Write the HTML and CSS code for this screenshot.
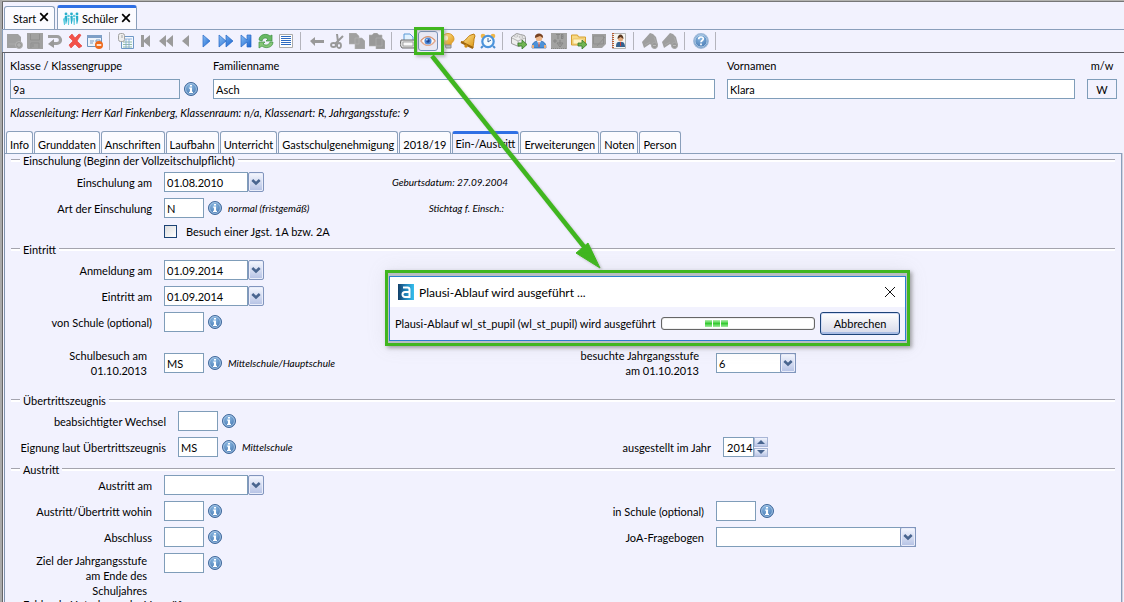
FILE: index.html
```html
<!DOCTYPE html>
<html lang="de">
<head>
<meta charset="utf-8">
<title>Schüler</title>
<link rel="stylesheet" href="styles.css">
</head>
<body>
<svg class="defs" aria-hidden="true">
  <defs>
    <linearGradient id="blue" x1="0" y1="0" x2="1" y2="1"><stop offset="0" stop-color="#8bc0f5"/><stop offset="1" stop-color="#1763cf"/></linearGradient>
    <linearGradient id="gold" x1="0" y1="0" x2="1" y2="1"><stop offset="0" stop-color="#ffe9a0"/><stop offset="1" stop-color="#dc930c"/></linearGradient>
    <linearGradient id="logo"><stop offset="0" stop-color="#123f68"/><stop offset=".4" stop-color="#1f78ae"/><stop offset="1" stop-color="#35c0ef"/></linearGradient>
    <radialGradient id="ball" cx=".45" cy=".3" r=".8"><stop offset="0" stop-color="#8ab8e2"/><stop offset="1" stop-color="#3b6da9"/></radialGradient>
  </defs>
  <symbol id="info" viewBox="0 0 14 14"><circle cx="7" cy="7" r="6.5" fill="url(#ball)" stroke="#42699b"/><circle cx="7" cy="7" r="5.4" fill="none" stroke="#b5d1eb" stroke-width=".8"/><path d="M6 3h2v1.6H6zM5.2 5.6H8v4.2h1v1.1H5V9.8h1V6.7h-.8z" fill="#fff"/></symbol>
  <symbol id="arrow-down" viewBox="0 0 10 8"><path d="M1.3 2L5 5.500 8.700 2" fill="none" stroke="#49658f" stroke-width="2.600"/></symbol>
  <symbol id="close" viewBox="0 0 10 10"><path d="M1.200 1.200l7.600 7.600M8.800 1.200L1.200 8.800" stroke="currentColor" stroke-width="1.700" fill="none"/></symbol>
  <symbol id="plus-page" viewBox="0 0 16 16"><path d="M0 1h11l3 3v11H0z" fill="#a0a0a0"/><path d="M2 11h8" stroke="#aaa"/><circle cx="12" cy="12" r="3.500" fill="#999" stroke="#b4b4b4"/><path d="M10 12h4M12 10v4" stroke="#b9b9b9"/></symbol>
  <symbol id="save" viewBox="0 0 16 16"><path d="M0 0h16v16H1l-1-1z" fill="#a0a0a0"/><path d="M3.500 1v6h9V1M4 15v-5h8v5M6 11v3" stroke="#8f8f8f" fill="none"/></symbol>
  <symbol id="undo" viewBox="0 0 16 16"><path d="M1 3.500h9a3.500 3.500 0 0 1 0 7H6" fill="none" stroke="#a0a0a0" stroke-width="3.200"/><path d="M7 6v9l-6-4z" fill="#999"/></symbol>
  <symbol id="delete" viewBox="0 0 16 16"><path d="M2 4l3-3 3 4 4-4 2 1-4 6 5 5-3 2-4-4-4 4-2-3 4-4z" fill="#f35149" stroke="#e33b34" stroke-width=".6"/></symbol>
  <symbol id="card" viewBox="0 0 16 16"><path d="M.5 2.500h14v11H.5z" fill="#eff4fa" stroke="#6c93be"/><path d="M0 2h15v3H0z" fill="#7e9fc7"/><path d="M3 8h4M3 10h3M9 7h4v2H9z" stroke="#7b9bc0" fill="none"/><circle cx="12" cy="12" r="4" fill="#ee6a1c"/><path d="M9.700 12h4.600" stroke="#fff" stroke-width="1.600"/></symbol>
  <symbol id="sheet" viewBox="0 0 16 16"><path d="M3.500 3.500h12v12h-12z" fill="#f4f9ff" stroke="#6f98c7"/><path d="M5 9h9M5 11.500h9M5 14h9" stroke="#7aad8c" stroke-width=".8"/><path d="M7 6h7M8 6v9M11 6v9" stroke="#7fa5d5" stroke-width=".8"/><rect x=".5" y=".5" width="6" height="8" rx="2" fill="#eee" stroke="#a2a2a2"/><path d="M4 2v3" stroke="#aaa"/></symbol>
  <symbol id="first" viewBox="0 0 16 16"><path d="M3 2h3v5l6-5v12L6 9v5H3z" fill="#9b9b9b"/></symbol>
  <symbol id="rewind" viewBox="0 0 16 16"><path d="M8 2v12L1 8zM15 2v12L8 8z" fill="#9b9b9b"/></symbol>
  <symbol id="prev" viewBox="0 0 16 16"><path d="M11 2v12L4 8z" fill="#9b9b9b"/></symbol>
  <symbol id="next" viewBox="0 0 16 16"><path d="M5 2v12l7-6z" fill="url(#blue)" stroke="#2769c7" stroke-width=".7"/></symbol>
  <symbol id="forward" viewBox="0 0 16 16"><path d="M1 2v12l7-6zM8 2v12l7-6z" fill="url(#blue)" stroke="#2769c7" stroke-width=".7"/></symbol>
  <symbol id="last" viewBox="0 0 16 16"><path d="M3 2v12l6-5v5h4V2H9v5z" fill="url(#blue)" stroke="#2769c7" stroke-width=".7"/></symbol>
  <symbol id="refresh" viewBox="0 0 16 16"><path d="M1 7c0-6 8-7 11-4l2-1v6H8l2-2C7 4 5 5 4 8z" fill="#69b965" stroke="#3e9043" stroke-width=".7"/><path d="M15 9c0 6-8 7-11 4l-3 2V9h6l-2 2c3 2 6 1 7-2z" fill="#85c678" stroke="#3e9043" stroke-width=".7"/></symbol>
  <symbol id="list" viewBox="0 0 16 16"><path d="M1.500 1.500h13v13h-13z" fill="#fff" stroke="#aaa"/><path d="M3 3.500h10M3 5.500h10M3 7.500h10M3 9.500h10M3 11.500h10" stroke="#2e6bc2"/></symbol>
  <symbol id="back" viewBox="0 0 16 16"><path d="M1 8l5-4v3h9v3H6v3z" fill="#999"/></symbol>
  <symbol id="cut" viewBox="0 0 16 16"><path d="M8 1l1 8M14 3l-8 8" stroke="#999" stroke-width="2"/><ellipse cx="4.500" cy="12" rx="2.500" ry="2" fill="none" stroke="#999" stroke-width="1.800"/><ellipse cx="10" cy="12.500" rx="2" ry="2.500" fill="none" stroke="#999" stroke-width="1.800"/></symbol>
  <symbol id="copy" viewBox="0 0 16 16"><path d="M0 0h7l3 3v8H0zM6 5h7l3 3v8H6z" fill="#a0a0a0" stroke="#b5b5b5" stroke-width=".6"/></symbol>
  <symbol id="paste" viewBox="0 0 16 16"><path d="M0 2h3l2-2h3l2 2h3v11H0zM7 5h6l3 3v8H7z" fill="#999" stroke="#b3b3b3" stroke-width=".6"/></symbol>
  <symbol id="print" viewBox="0 0 16 16"><path d="M4 8V1h6l3 3v4" fill="#e2f2ff" stroke="#5b99d6"/><path d="M1 7h14l1 5-2 3H2l-2-3z" fill="#ddd" stroke="#6c6c6c"/><path d="M3 9h10v4H3z" fill="#f9f9f9" stroke="#888" stroke-width=".7"/></symbol>
  <symbol id="eye" viewBox="0 0 18 16"><path d="M1 8q8-10 16 0q-8 10-16 0z" fill="#fff" stroke="#e1aa91" stroke-width="1.500"/><path d="M1 7q8-8 16 0" fill="none" stroke="#d29070"/><circle cx="9" cy="8" r="4" fill="#4d87d5"/><circle cx="9" cy="8" r="2" fill="#204690"/><circle cx="7.700" cy="6.500" r="1" fill="#b8dcff"/></symbol>
  <symbol id="bulb" viewBox="0 0 16 16"><path d="M5 12c0-3-3-3-3-6a6 5.500 0 0 1 12 0c0 3-3 3-3 6z" fill="url(#gold)" stroke="#d99a2b"/><path d="M5 12h6v3H6z" fill="#bbb" stroke="#8b8b8b"/><ellipse cx="6" cy="5" rx="2" ry="2.500" fill="#fff8d4"/></symbol>
  <symbol id="bell" viewBox="0 0 16 16"><path d="M1 9c5 0 6-6 10-7l3-1 1 2-1 3c0 4-1 6-1 9z" fill="url(#gold)" stroke="#bd7c0f"/><path d="M1 9l12 6" stroke="#9f6510" stroke-width="2"/><circle cx="6" cy="13" r="1.700" fill="#d08b10"/></symbol>
  <symbol id="clock" viewBox="0 0 16 16"><path d="M3 13l-2 2M13 13l2 2" stroke="#4d8ecf" stroke-width="2"/><circle cx="3" cy="3" r="2.300" fill="#efb649"/><circle cx="13" cy="3" r="2.300" fill="#efb649"/><circle cx="8" cy="8.500" r="5.700" fill="#f5fbff" stroke="#4b93dc" stroke-width="2.200"/><path d="M8 5v4l3-2" fill="none" stroke="#3467a2"/></symbol>
  <symbol id="go" viewBox="0 0 16 16"><path d="M7 10h4V7l5 4.500-5 4.500v-3H7z" fill="#71b553" stroke="#35792a" stroke-width=".8"/></symbol>
  <symbol id="box" viewBox="0 0 16 16"><path d="M.500 4l3-2 2-1.500 4 1 4 1 1 2v6l-7 3-7-3z" fill="#eee" stroke="#999"/><path d="M1 5l6 3 7-3M7 8v5" stroke="#b4b4b4" fill="none"/><ellipse cx="5" cy="3" rx="2" ry="1" fill="#fff" stroke="#999" stroke-width=".6"/><ellipse cx="10" cy="4" rx="2" ry="1" fill="#fff" stroke="#999" stroke-width=".6"/><use href="#go"/></symbol>
  <symbol id="person" viewBox="0 0 16 16"><path d="M1 15c0-5 2-6 5-7h4c3 1 5 2 5 7z" fill="#4c91d9" stroke="#2862a2" stroke-width=".7"/><path d="M6 8h4l-2 4z" fill="#fff"/><path d="M8 9v5" stroke="#d34c37"/><circle cx="8" cy="5" r="3.300" fill="#edb78b"/><path d="M4 5C3-1 13-1 12 5L9 3z" fill="#784323"/><path d="M1 12h2v3H1zM13 12h2v3h-2z" fill="#e8ad7b"/></symbol>
  <symbol id="tb" viewBox="0 0 16 16"><path d="M0 0h16v16H0z" fill="#a2a2a2"/><path d="M5 1.500h4M7 2v4M10.500 1v5M10 1.500h2v2h-2h2v2h-2M2 8h4M4 6v4M9 7v5M6 10l3 4 3-4z" stroke="#858585" fill="none"/><path d="M0 15.500h16" stroke="#888" stroke-dasharray="1 1"/></symbol>
  <symbol id="folder" viewBox="0 0 16 16"><path d="M.500 2h6l1 2h7v8H.500z" fill="#f8d985" stroke="#d5a030"/><path d="M2 6h11v5H2z" fill="#fff3c4" stroke="#e5b953" stroke-width=".7"/><use href="#go"/></symbol>
  <symbol id="note" viewBox="0 0 16 16"><path d="M1 1h14v10l-4 4H1z" fill="#a0a0a0"/><path d="M2.500 3h10v8h-10zM6 13l8-9" stroke="#8f8f8f" fill="none"/></symbol>
  <symbol id="contact" viewBox="0 0 16 16"><path d="M1.500.500h13v15h-13z" fill="#f5f5f2" stroke="#b5b5b5"/><path d="M2 0v16" stroke="#bb5c32" stroke-width="2" stroke-dasharray="1 1"/><path d="M5 14c0-4 1-5 3-5h3c2 0 3 2 3 5z" fill="#35618e"/><circle cx="9.500" cy="6" r="2.500" fill="#e4ab7f"/><path d="M6.500 6c0-6 6-6 6 0l-3-2z" fill="#593620"/><path d="M9.500 9v4" stroke="#cf3e36"/></symbol>
  <symbol id="tag" viewBox="0 0 16 16"><path d="M0 9l8-9 3 1 3 3 2 8-3 4-5-5-6 4z" fill="#9f9f9f"/><path d="M3 12l5-3M12 4l2 6" stroke="#aaa"/><circle cx="12.500" cy="12.500" r="3" fill="#999" stroke="#aaa"/><path d="M11 12.500h3" stroke="#bbb"/></symbol>
  <symbol id="help" viewBox="0 0 14 14"><circle cx="7" cy="7" r="6.400" fill="url(#ball)" stroke="#9fb9d8"/><circle cx="7" cy="7" r="5.300" fill="none" stroke="#c9def1" stroke-width=".7"/><path d="M5 5.400c0-2.500 4-2.500 4-.3 0 1.500-2 1.500-2 3M7 9.200v1.500" fill="none" stroke="#fff" stroke-width="1.500"/></symbol>
</svg>

<div class="window">
  <nav class="docs" aria-label="Dokumente">
    <div class="doc"><span>Start</span><button aria-label="Start schließen"><svg width="10" height="10"><use href="#close"/></svg></button></div>
    <div class="doc doc-active">
      <svg width="16" height="13" viewBox="0 0 16 13"><g fill="#29aecb"><circle cx="3" cy="2" r="1.400"/><circle cx="8.500" cy="2" r="1.400"/><circle cx="14" cy="2" r="1.400"/><path d="M1.800 4h2.400v4l-1 4H2.600zM7.300 4h2.400v4l-1 4h-.6zM12.800 4h2.400v4l-1 4h-.6z"/></g><g fill="#5ecde0"><circle cx="5.500" cy="4" r="1.300"/><circle cx="11.200" cy="4" r="1.300"/><path d="M0 7l2-2v8H1zM4.500 6h2l-.5 7h-1zM10.200 6h2l-.5 7h-1z"/></g></svg>
      <span>Schüler</span><button aria-label="Schüler schließen"><svg width="10" height="10"><use href="#close"/></svg></button>
    </div>
  </nav>

  <div class="toolbar" role="toolbar" aria-label="Werkzeuge">
    <div class="tools">
      <button aria-label="Neu"><svg><use href="#plus-page"/></svg></button>
      <button aria-label="Speichern"><svg><use href="#save"/></svg></button>
      <button aria-label="Rückgängig"><svg><use href="#undo"/></svg></button>
      <button aria-label="Löschen"><svg><use href="#delete"/></svg></button>
      <button aria-label="Karte entfernen"><svg><use href="#card"/></svg></button>
    </div>
    <div class="tools">
      <button aria-label="Tabelle"><svg><use href="#sheet"/></svg></button>
      <button aria-label="Erster"><svg><use href="#first"/></svg></button>
      <button aria-label="Schnell zurück"><svg><use href="#rewind"/></svg></button>
      <button aria-label="Voriger"><svg><use href="#prev"/></svg></button>
      <button aria-label="Nächster"><svg><use href="#next"/></svg></button>
      <button aria-label="Schnell vor"><svg><use href="#forward"/></svg></button>
      <button aria-label="Letzter"><svg><use href="#last"/></svg></button>
      <button aria-label="Aktualisieren"><svg><use href="#refresh"/></svg></button>
      <button aria-label="Liste"><svg><use href="#list"/></svg></button>
    </div>
    <div class="tools">
      <button aria-label="Zurück"><svg><use href="#back"/></svg></button>
      <button aria-label="Ausschneiden"><svg><use href="#cut"/></svg></button>
      <button aria-label="Kopieren"><svg><use href="#copy"/></svg></button>
      <button aria-label="Einfügen"><svg><use href="#paste"/></svg></button>
    </div>
    <div class="tools">
      <button aria-label="Drucken"><svg><use href="#print"/></svg></button>
      <button class="pressed" aria-label="Plausibilität prüfen"><svg><use href="#eye"/></svg></button>
      <button aria-label="Hinweis"><svg><use href="#bulb"/></svg></button>
      <button aria-label="Erinnerung"><svg><use href="#bell"/></svg></button>
      <button aria-label="Wiedervorlage"><svg><use href="#clock"/></svg></button>
    </div>
    <div class="tools">
      <button aria-label="Modul öffnen"><svg><use href="#box"/></svg></button>
      <button aria-label="Person"><svg><use href="#person"/></svg></button>
      <button aria-label="Textbaustein"><svg><use href="#tb"/></svg></button>
      <button aria-label="Ordner öffnen"><svg><use href="#folder"/></svg></button>
      <button aria-label="Notiz"><svg><use href="#note"/></svg></button>
      <button aria-label="Kontakte"><svg><use href="#contact"/></svg></button>
    </div>
    <div class="tools">
      <button aria-label="Markierung hinzufügen"><svg><use href="#tag"/></svg></button>
      <button aria-label="Markierung entfernen"><svg><use href="#tag"/></svg></button>
    </div>
    <div class="tools">
      <button aria-label="Hilfe"><svg><use href="#help"/></svg></button>
    </div>
  </div>

  <main>
    <div class="head">
      <div class="stack"><label for="klasse">Klasse / Klassengruppe</label><div class="field"><input class="klasse readonly" id="klasse" value="9a" readonly><svg class="info"><use href="#info"/></svg></div></div>
      <div class="stack"><label for="fam">Familienname</label><input id="fam" value="Asch"></div>
      <div class="stack"><label for="vor">Vornamen</label><input id="vor" value="Klara"></div>
      <div class="stack center"><label for="mw">m/w</label><input class="readonly center" id="mw" value="W" readonly></div>
    </div>
    <p class="summary">Klassenleitung: Herr Karl Finkenberg, Klassenraum: n/a, Klassenart: R, Jahrgangsstufe: 9</p>

    <div class="tabs" role="tablist">
      <button role="tab">Info</button><button role="tab">Grunddaten</button><button role="tab">Anschriften</button><button role="tab">Laufbahn</button><button role="tab">Unterricht</button><button role="tab">Gastschulgenehmigung</button><button role="tab">2018/19</button><button role="tab" class="active" aria-selected="true">Ein-/Austritt</button><button role="tab">Erweiterungen</button><button role="tab">Noten</button><button role="tab">Person</button>
    </div>

    <div class="panel">
      <section class="group einschulung">
        <h2>Einschulung (Beginn der Vollzeitschulpflicht)</h2>
        <div class="rows">
          <div class="row"><label for="ea">Einschulung am</label><div class="combo date"><input id="ea" value="01.08.2010"><button aria-label="Datum wählen"><svg><use href="#arrow-down"/></svg></button></div><span class="hint">Geburtsdatum: 27.09.2004</span></div>
          <div class="row"><label for="art">Art der Einschulung</label><div class="field"><input class="code" id="art" value="N"><svg class="info"><use href="#info"/></svg><span class="hint">normal (fristgemäß)</span></div><span class="hint">Stichtag f. Einsch.:</span></div>
          <div class="row check"><span></span><label><input type="checkbox">Besuch einer Jgst. 1A bzw. 2A</label></div>
        </div>
      </section>

      <section class="group eintritt">
        <h2>Eintritt</h2>
        <div class="rows">
          <div class="row"><label for="anm">Anmeldung am</label><div class="combo date"><input id="anm" value="01.09.2014"><button aria-label="Datum wählen"><svg><use href="#arrow-down"/></svg></button></div></div>
          <div class="row"><label for="ein">Eintritt am</label><div class="combo date"><input id="ein" value="01.09.2014"><button aria-label="Datum wählen"><svg><use href="#arrow-down"/></svg></button></div></div>
          <div class="row"><label for="von">von Schule (optional)</label><div class="field"><input class="code" id="von"><svg class="info"><use href="#info"/></svg></div></div>
          <div class="row double"><label for="besuch">Schulbesuch am<br>01.10.2013</label><div class="field"><input class="code" id="besuch" value="MS"><svg class="info"><use href="#info"/></svg><span class="hint">Mittelschule/Hauptschule</span></div><label for="jgst">besuchte Jahrgangsstufe<br>am 01.10.2013</label><div class="combo grade"><select id="jgst"><option>6</option></select><span class="knob"><svg><use href="#arrow-down"/></svg></span></div></div>
        </div>
      </section>

      <section class="group zeugnis">
        <h2>Übertrittszeugnis</h2>
        <div class="rows">
          <div class="row"><label for="wechsel">beabsichtigter Wechsel</label><div class="field"><input class="code" id="wechsel"><svg class="info"><use href="#info"/></svg></div></div>
          <div class="row"><label for="eig">Eignung laut Übertrittszeugnis</label><div class="field"><input class="code" id="eig" value="MS"><svg class="info"><use href="#info"/></svg><span class="hint">Mittelschule</span></div><label for="jahr">ausgestellt im Jahr</label><div class="spin"><input id="jahr" value="2014"><div class="steps"><button aria-label="Mehr"><svg viewBox="0 0 8 4"><path d="M0 4l4-4 4 4z"/></svg></button><button aria-label="Weniger"><svg viewBox="0 0 8 4"><path d="M0 0l4 4 4-4z"/></svg></button></div></div></div>
        </div>
      </section>

      <section class="group austritt">
        <h2>Austritt</h2>
        <div class="rows">
          <div class="row"><label for="aus">Austritt am</label><div class="combo date"><input id="aus"><button aria-label="Datum wählen"><svg><use href="#arrow-down"/></svg></button></div></div>
          <div class="row"><label for="wohin">Austritt/Übertritt wohin</label><div class="field"><input class="code" id="wohin"><svg class="info"><use href="#info"/></svg></div><label for="insch">in Schule (optional)</label><div class="field"><input class="code" id="insch"><svg class="info"><use href="#info"/></svg></div></div>
          <div class="row"><label for="abs">Abschluss</label><div class="field"><input class="code" id="abs"><svg class="info"><use href="#info"/></svg></div><label for="joa">JoA-Fragebogen</label><div class="combo joa"><select id="joa"><option></option></select><span class="knob"><svg><use href="#arrow-down"/></svg></span></div></div>
          <div class="row tall"><label for="ziel">Ziel der Jahrgangsstufe<br>am Ende des<br>Schuljahres</label><div class="field"><input class="code" id="ziel"><svg class="info"><use href="#info"/></svg></div></div>
        </div>
      </section>

      <section class="group">
        <h2>Fehlende Unterlagen der Vorprüf.</h2>
      </section>
    </div>
  </main>
</div>

<div class="marker"></div>
<svg class="pointer" width="190" height="225" viewBox="0 0 190 225" aria-hidden="true"><path d="M12 5L165 197" stroke="#40b61f" stroke-width="4.500"/><path d="M180 217l-24-15 12-10z" fill="#40b61f" stroke="#40b61f"/></svg>

<div class="dialog" role="dialog" aria-labelledby="dlg-title">
  <div class="dialog-inner">
    <header class="dialog-title">
      <svg width="16" height="16" viewBox="0 0 16 16"><path d="M0 0h16v16H0z" fill="url(#logo)"/><path d="M5 3.500h4.500q2 0 2 2V13H7a2.300 2.300 0 0 1 0-5h4.500" fill="none" stroke="#fff" stroke-width="2"/></svg>
      <span id="dlg-title">Plausi-Ablauf wird ausgeführt ...</span>
      <button aria-label="Schließen"><svg width="12" height="12" viewBox="0 0 12 12"><path d="M1 1l10 10M11 1L1 11" stroke="#111" fill="none"/></svg></button>
    </header>
    <div class="dialog-body">
      <span>Plausi-Ablauf wl_st_pupil (wl_st_pupil) wird ausgeführt</span>
      <div class="progress" role="progressbar" aria-label="Fortschritt"><i></i><i></i><i></i></div>
      <button class="cancel">Abbrechen</button>
    </div>
  </div>
</div>
</body>
</html>
```
FILE: styles.css
```css
* { box-sizing: border-box; }
html, body { height: 100%; }
body {
  margin: 0;
  overflow: hidden;
  position: relative;
  background: #f2f2fe;
  color: #000;
  font: 11px/15px Lato, "Open Sans", "Noto Sans", sans-serif;
}
input, button, select { font: inherit; color: inherit; margin: 0; border-radius: 0; }
button { border: 0; padding: 0; background: none; }
svg { display: block; flex: none; }
.defs { position: absolute; width: 0; height: 0; }

.window {
  min-height: 100%;
  padding-top: 3px;
  border-left: 2px solid #aaa;
  box-shadow: inset 0 1px #b4b4b0, inset 0 2px #777, inset 1px 0 #666;
}

.docs { display: flex; align-items: flex-end; gap: 2px; padding: 2px 0 0 2px; border-bottom: 1px solid #8a9fbb; }
.doc {
  display: flex; align-items: center; gap: 3px;
  height: 23px; padding: 0 5px 0 8px;
  border: 1px solid #8a9fbb; border-bottom: 0; border-radius: 3px 3px 0 0;
  background: #fbfbff;
}
.doc-active { height: 24px; padding: 0 5px; border-top: 3px solid #2f6fe4; }
.doc button { padding-bottom: 2px; }

.toolbar { display: flex; height: 23px; padding: 1px 0 0 1px; border-bottom: 1px solid #606068; box-shadow: inset 1px 0 #8a9fbb; }
.tools { display: flex; align-items: center; padding-left: 2px; height: 20px; }
.tools::after { content: ""; width: 1px; height: 18px; margin: 0 4px; background: #b4b4bc; }
.tools button { width: 20px; height: 20px; display: grid; place-items: center; }
.tools svg { width: 16px; height: 16px; }
.tools .pressed { border: 1px solid #7890b5; border-radius: 3px; background: #e8e8f4; }

main { margin-left: 2px; border-left: 1px solid #8093ad; }
.head { display: grid; grid-template-columns: 191px 502fr 348fr 30px; gap: 12px; padding: 5px 7px 0 5px; }
.stack { display: flex; flex-direction: column; gap: 6px; min-width: 0; }
.center { text-align: center; }
.field { display: flex; align-items: center; gap: 4px; }
.info { width: 14px; height: 14px; }
input, select {
  height: 20px; width: 100%; min-width: 0; padding: 0 2px;
  border: 1px solid #7f9db9; background: #fff; appearance: none; outline: 0;
}
.klasse { width: 170px; }
.readonly { background: #f2f2fe; }
.summary { margin: 6px 0 0; padding-left: 5px; font-style: italic; }

.tabs { display: flex; gap: 1px; margin-top: 11px; padding-left: 1px; }
.tabs button {
  height: 22px; padding: 3px 3px 0;
  border: 1px solid #8a9fbb; border-bottom: 0; border-radius: 3px 3px 0 0; background: #fbfbff;
}
.tabs .active { padding: 0 3px; border-top: 3px solid #2f6fe4; background: #f2f2fe; }

.panel { margin-right: 2px; border: 1px solid #8a9fbb; border-width: 1px 1px 0 0; box-shadow: 1px 0 #d0d0dc; }
.group h2 { display: flex; align-items: center; gap: 3px; height: 12px; margin: 0; padding: 0 6px; font: inherit; white-space: nowrap; }
.group h2::before, .group h2::after { content: ""; height: 2px; border-top: 1px solid #a4a4ae; background: #fff; width: 9px; }
.group h2::after { flex: 1; }
.rows { display: grid; gap: 6px; padding-top: 5px; }
.row {
  display: grid; grid-template-columns: 147px 228px 300px 1fr; column-gap: 12px;
  align-items: center; min-height: 20px; white-space: nowrap;
}
.row > label, .row > .hint { text-align: right; }
.hint { font-size: 10px; font-style: italic; }
.einschulung .rows { padding-top: 6px; }
.einschulung .row { grid-template-columns: 147px 216px 112px 1fr; }
.einschulung .check { min-height: 14px; }
.check label { display: flex; align-items: center; gap: 9px; }
.check input { width: 13px; height: 13px; border-color: #1c4375; background: linear-gradient(135deg, #ddd, #fff); }
.einschulung { padding-bottom: 4px; }
.eintritt { padding-bottom: 16px; }
.zeugnis { padding-bottom: 6px; }
.zeugnis .row { grid-template-columns: 161px 221px 300px 1fr; }
.austritt .rows { padding-top: 0; }
.double { margin-top: 10px; }
.double > label, .tall > label { padding-right: 5px; }
.tall { align-items: start; }
.code { width: 40px; }
.field .hint { margin-left: 2px; }

.combo { display: grid; grid-template-columns: 1fr 16px; }
.date { width: 100px; }
.grade { width: 80px; }
.joa { width: 200px; }
.combo select { grid-area: 1 / 1 / 2 / 3; padding-right: 18px; }
.combo .knob { grid-area: 1 / 2; pointer-events: none; }
.combo button, .knob {
  display: grid; place-items: center;
  border: 1px solid #8195bd; border-radius: 2px;
  background: linear-gradient(#f6f8ff, #b4c1e4);
  box-shadow: inset 0 0 0 1px #e9edfa;
}
.combo svg { width: 10px; height: 8px; }
.spin { display: flex; width: 45px; }
.spin input { flex: 1; padding: 0 0 0 3px; }
.steps { display: grid; width: 14px; gap: 1px; }
.steps button { display: grid; place-items: center; border: 1px solid #a9b6d6; background: linear-gradient(#f1f4fd, #bac6e6); }
.steps svg { width: 8px; height: 4px; fill: #49658f; }

/* Callout drawn over the form */
.marker { position: absolute; left: 414px; top: 27px; width: 30px; height: 28px; border: 3px solid #40b61f; box-shadow: 2px 2px 3px #8888, inset 1px 1px 2px #8888; }
.pointer { position: absolute; left: 420px; top: 51px; filter: drop-shadow(2px 2px 1px #8886); }
.dialog {
  position: absolute; left: 385px; top: 270px; width: 525px; padding: 3px 1px 2px;
  border: 3px solid #40b61f; background: #b9bcc4;
  box-shadow: 2px 2px 4px #777a, 0 0 18px #9992;
}
.dialog-inner { border: 1px solid #2a80ce; background: #f2f2fe; }
.dialog-title { display: flex; align-items: center; gap: 5px; height: 30px; padding: 0 9px 0 8px; background: #fff; font-size: 12px; }
.dialog-title button { margin-left: auto; }
.dialog-body { display: flex; align-items: center; gap: 5px; height: 33px; padding: 0 5px; white-space: nowrap; }
.progress { flex: 1; display: flex; gap: 1px; height: 13px; padding: 2px 0 2px 43px; border: 1px solid #666; border-radius: 3px; background: #fff; box-shadow: inset 0 0 1px #666; }
.progress i { width: 7px; background: linear-gradient(#b5efb0, #35cb31 50%, #a4eba0); }
.cancel { width: 80px; height: 23px; border: 1px solid #1d4379; border-radius: 3px; background: linear-gradient(#fff, #d6d8e8); box-shadow: inset 0 -2px #a9bce4, inset 0 0 0 1px #d2dcf5; }
```
